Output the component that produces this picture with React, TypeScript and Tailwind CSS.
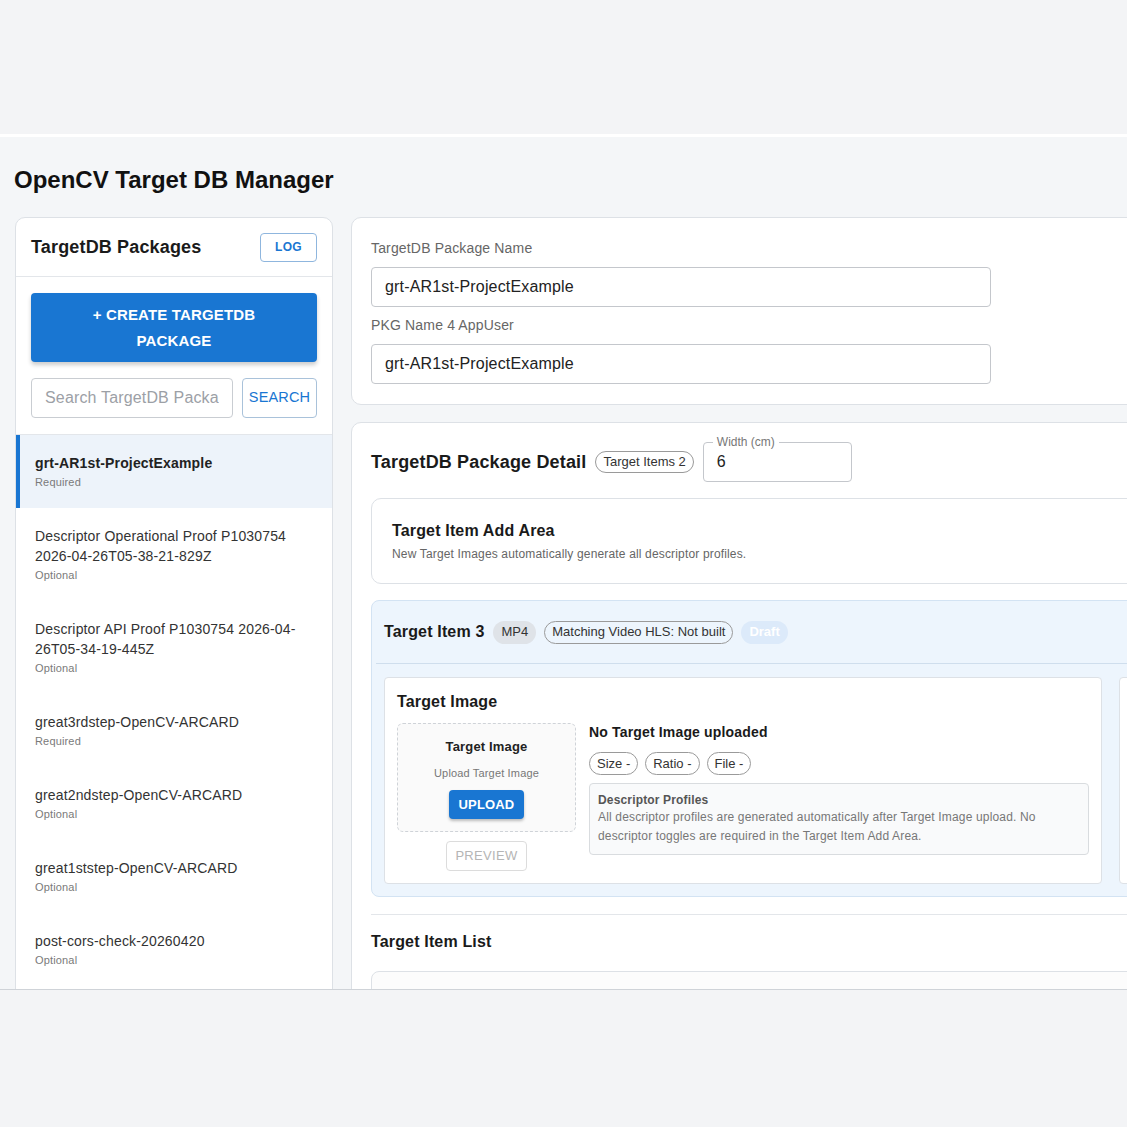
import React from "react";

const items = [
  { t: "grt-AR1st-ProjectExample", s: "Required", sel: true },
  { t: "Descriptor Operational Proof P1030754 2026-04-26T05-38-21-829Z", s: "Optional" },
  { t: "Descriptor API Proof P1030754 2026-04-26T05-34-19-445Z", s: "Optional" },
  { t: "great3rdstep-OpenCV-ARCARD", s: "Required" },
  { t: "great2ndstep-OpenCV-ARCARD", s: "Optional" },
  { t: "great1ststep-OpenCV-ARCARD", s: "Optional" },
  { t: "post-cors-check-20260420", s: "Optional" },
];

const chip = "h-[23px] px-[7px] rounded-full border border-[#9a9a9a] text-[13px] flex items-center text-[#333] tracking-normal";

export default function App() {
  return (
    <div className="w-[1127px] h-[1127px] bg-[#f3f4f6] flex flex-col overflow-hidden font-['Liberation_Sans',Arial,sans-serif] text-[#222]">
      <div className="h-[134px] shrink-0" />
      <div className="h-[3px] bg-white shrink-0" />
      <div className="h-[853px] shrink-0 overflow-hidden bg-[#f4f6f8] border-b border-[#cfd3d8] pl-[15px] pt-[27px] tracking-[0.01em]">
        <h1 className="-ml-px text-[24px] leading-[32px] font-bold text-[#111] tracking-normal">OpenCV Target DB Manager</h1>
        <div className="flex gap-[18px] mt-[21px] items-start">
          {/* Left panel */}
          <div className="w-[318px] min-h-[900px] shrink-0 bg-white border border-[#dde1e6] rounded-[10px] overflow-hidden">
            <div className="flex items-center justify-between px-[15px] h-[59px] border-b border-[#e3e6ea]">
              <span className="text-[18px] font-bold text-[#1a1a1a]">TargetDB Packages</span>
              <button className="w-[57px] h-[29px] border border-[#8fb6de] rounded-[4px] text-[12px] font-bold text-[#1976d2] tracking-wide">LOG</button>
            </div>
            <div className="px-[15px] pt-[16px] pb-[16px] border-b border-[#e3e6ea]">
              <button className="w-full h-[69px] bg-[#1976d2] rounded-[4px] text-white text-[15px] leading-[26px] font-semibold shadow-[0_3px_4px_rgba(0,0,0,0.2)] px-[40px]">
                + CREATE TARGETDB PACKAGE
              </button>
              <div className="flex gap-[9px] mt-[16px]">
                <input
                  className="w-[202px] h-[40px] border border-[#c9cdd2] rounded-[4px] px-[13px] text-[16px] placeholder:text-[#9ca0a6] outline-none"
                  placeholder="Search TargetDB Packages"
                />
                <button className="w-[75px] h-[40px] border border-[#a9c2da] rounded-[4px] text-[14.5px] text-[#1976d2]">SEARCH</button>
              </div>
            </div>
            <div>
              {items.map((it, i) => (
                <div
                  key={i}
                  className={
                    it.sel
                      ? "border-l-[4px] border-[#1976d2] bg-[#edf3fa] pl-[15px] pr-[20px] py-[18px]"
                      : "border-l-[4px] border-transparent pl-[15px] pr-[20px] py-[18px]"
                  }
                >
                  <div className={it.sel ? "text-[14px] leading-[20px] font-bold text-[#222]" : "text-[14px] leading-[20px] text-[#333]"}>{it.t}</div>
                  <div className="text-[11px] leading-[16px] text-[#7a7a7a] mt-[1px]">{it.s}</div>
                </div>
              ))}
            </div>
          </div>

          {/* Right column */}
          <div className="w-[820px] shrink-0 flex flex-col gap-[17px]">
            <div className="bg-white border border-[#dde1e6] rounded-[10px] px-[19px] pt-[20px] pb-[20px]">
              <div className="text-[14px] leading-[20px] text-[#666]">TargetDB Package Name</div>
              <div className="mt-[9px] w-[620px] h-[40px] border border-[#c4c7cc] rounded-[4px] px-[13px] flex items-center text-[16px] text-[#222]">grt-AR1st-ProjectExample</div>
              <div className="mt-[8px] text-[14px] leading-[20px] text-[#666]">PKG Name 4 AppUser</div>
              <div className="mt-[9px] w-[620px] h-[40px] border border-[#c4c7cc] rounded-[4px] px-[13px] flex items-center text-[16px] text-[#222]">grt-AR1st-ProjectExample</div>
            </div>

            <div className="bg-white border border-[#dde1e6] rounded-[10px] px-[19px] pt-[19px] pb-[40px]">
              <div className="flex items-center gap-[9px] h-[40px]">
                <span className="text-[18px] font-bold text-[#1a1a1a]">TargetDB Package Detail</span>
                <span className="h-[22px] px-[7px] rounded-full border border-[#9a9a9a] text-[13px] flex items-center text-[#333] tracking-normal">Target Items 2</span>
                <div className="relative w-[149px] h-[40px] border border-[#c4c7cc] rounded-[4px] flex items-center px-[13px] text-[16px]">
                  6
                  <span className="absolute -top-[8px] left-[9px] bg-white px-[4px] text-[12px] leading-[14px] text-[#777] tracking-normal">Width (cm)</span>
                </div>
              </div>

              <div className="mt-[16px] border border-[#dde1e6] rounded-[10px] px-[20px] pt-[20px] pb-[21px]">
                <div className="text-[16px] leading-[24px] font-bold text-[#1a1a1a]">Target Item Add Area</div>
                <div className="text-[12px] leading-[16px] text-[#666] mt-[3px]">New Target Images automatically generate all descriptor profiles.</div>
              </div>

              <div className="mt-[16px] bg-[#edf5fd] border border-[#d3e3f3] rounded-[8px] pl-[12px] pt-[18px] pb-[12px]">
                <div className="flex items-center gap-[8px] h-[26px]">
                  <span className="text-[16px] font-bold text-[#1a1a1a] mr-[1px]">Target Item 3</span>
                  <span className="h-[23px] px-[8px] rounded-full bg-[#dfe3e8] text-[13px] flex items-center text-[#333] tracking-normal">MP4</span>
                  <span className={chip}>Matching Video HLS: Not built</span>
                  <span className="h-[23px] px-[8px] rounded-full bg-[#dceafa] text-[13px] font-bold flex items-center text-white tracking-normal">Draft</span>
                </div>
                <div className="mt-[18px] mb-[13px] -ml-[8px] h-px bg-[#cfdeed]" />
                <div className="flex gap-[17px]">
                  <div className="w-[718px] shrink-0 bg-white border border-[#dde1e6] rounded-[4px] px-[12px] pt-[12px] pb-[12px]">
                    <div className="text-[16px] leading-[24px] font-bold text-[#1a1a1a]">Target Image</div>
                    <div className="flex gap-[13px] mt-[9px]">
                      <div className="w-[179px] shrink-0 flex flex-col items-center">
                        <div className="w-full h-[109px] border border-dashed border-[#cfd3d8] rounded-[6px] bg-[#fafafa] flex flex-col items-center pt-[15px]">
                          <div className="text-[13px] leading-[16px] font-bold text-[#222]">Target Image</div>
                          <div className="text-[11px] leading-[14px] text-[#777] mt-[11px]">Upload Target Image</div>
                          <button className="mt-[10px] w-[75px] h-[29px] bg-[#1976d2] rounded-[4px] text-white text-[13px] font-bold shadow-[0_2px_3px_rgba(0,0,0,0.25)]">UPLOAD</button>
                        </div>
                        <button className="mt-[9px] w-[81px] h-[30px] border border-[#dcdcdc] rounded-[4px] text-[13px] text-[#b5b5b5] tracking-wide">PREVIEW</button>
                      </div>
                      <div className="flex-1 pr-[1px]">
                        <div className="text-[14px] leading-[18px] font-bold text-[#1a1a1a]">No Target Image uploaded</div>
                        <div className="flex gap-[7px] mt-[11px]">
                          <span className={chip}>Size -</span>
                          <span className={chip}>Ratio -</span>
                          <span className={chip}>File -</span>
                        </div>
                        <div className="mt-[8px] w-[500px] border border-[#d9dcdf] rounded-[4px] bg-[#f9fafb] px-[8px] pt-[8px] pb-[8px]">
                          <div className="text-[12px] leading-[16px] font-bold text-[#555]">Descriptor Profiles</div>
                          <div className="text-[12px] leading-[19px] text-[#777] pr-[8px]">
                            All descriptor profiles are generated automatically after Target Image upload. No descriptor toggles are required in the Target Item Add Area.
                          </div>
                        </div>
                      </div>
                    </div>
                  </div>
                  <div className="flex-1 bg-white border border-[#dde1e6] rounded-[4px]" />
                </div>
              </div>

              <div className="mt-[17px] h-px bg-[#e3e6ea]" />
              <div className="mt-[15px] text-[16px] leading-[24px] font-bold text-[#1a1a1a]">Target Item List</div>
              <div className="mt-[17px] h-[120px] border border-[#dde1e6] rounded-[8px] bg-[#fcfcfc]" />
            </div>
          </div>
        </div>
      </div>
      <div className="flex-1" />
    </div>
  );
}
